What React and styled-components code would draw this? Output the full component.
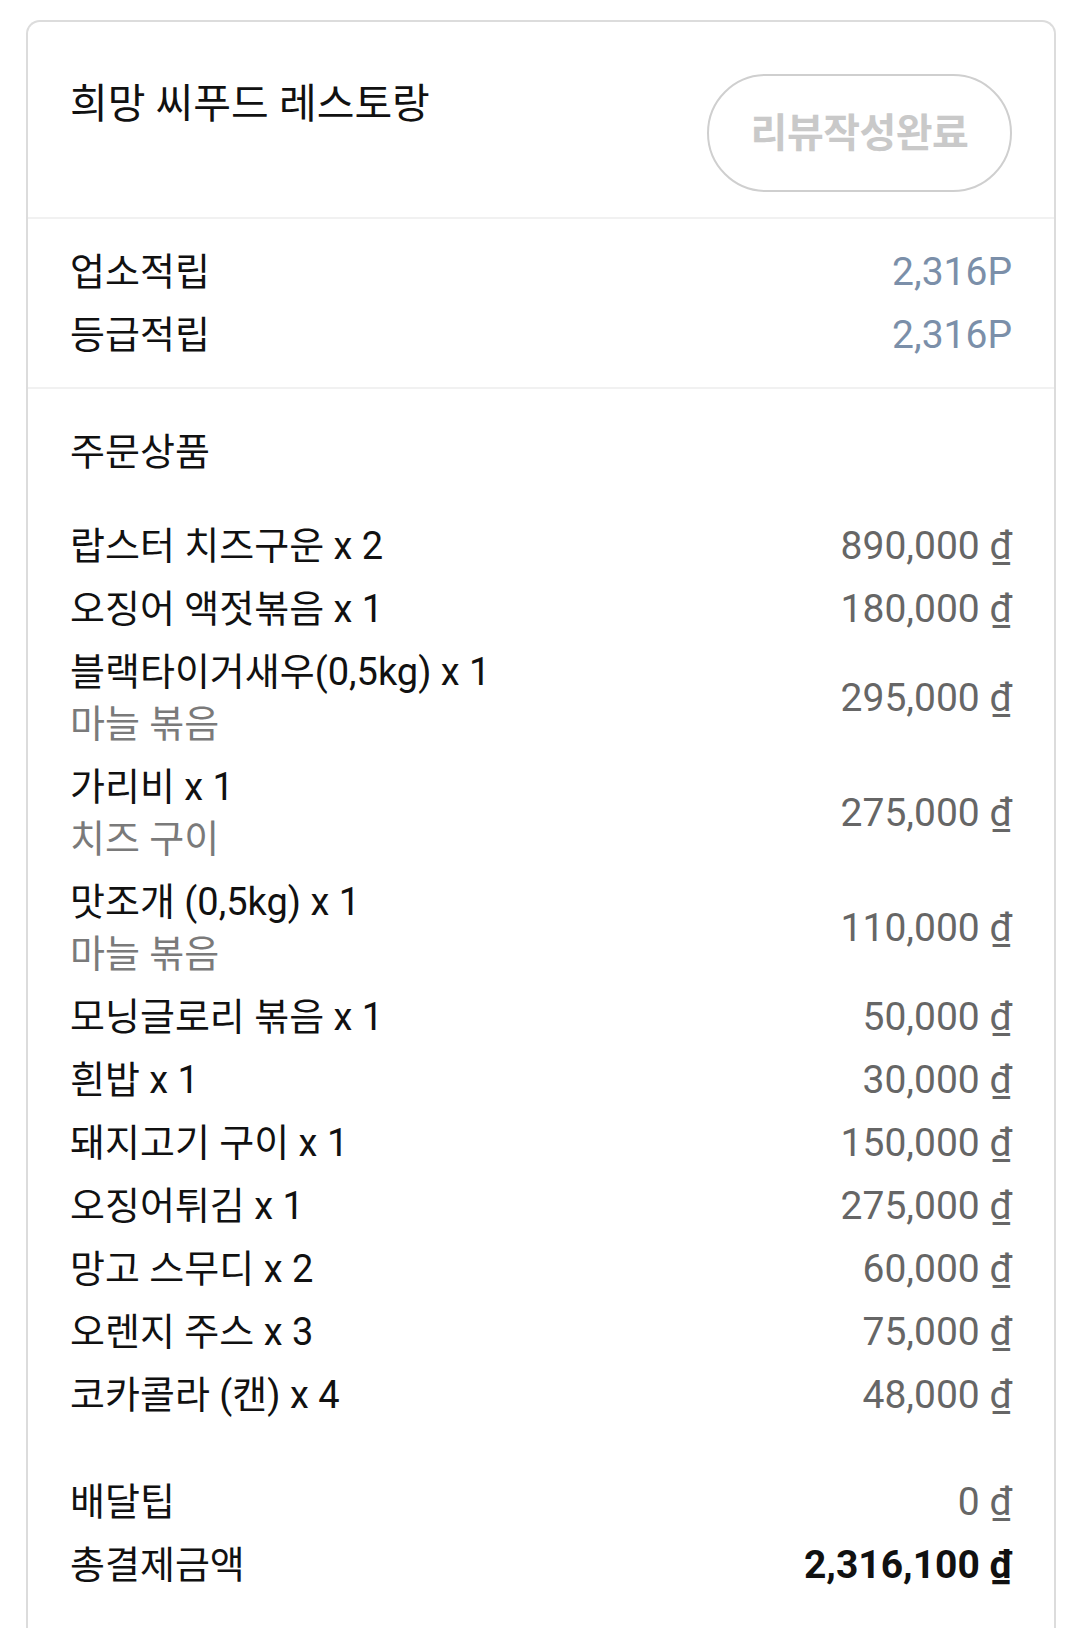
import React from "react";
import styled, { createGlobalStyle } from "styled-components";

const GlobalStyle = createGlobalStyle`
  html, body {
    margin: 0;
    padding: 0;
    background: #ffffff;
  }
  body {
    font-family: Roboto, "Noto Sans CJK KR", sans-serif;
    color: #111111;
    -webkit-font-smoothing: antialiased;
  }
`;

const Page = styled.div`
  width: 1080px;
  height: 1628px;
  overflow: hidden;
  padding-top: 20px;
  box-sizing: border-box;
`;

const Card = styled.div`
  margin-left: 26px;
  width: 1030px;
  box-sizing: border-box;
  border: 2px solid #dcdcdc;
  border-bottom: none;
  border-radius: 14px 14px 0 0;
  min-height: 1700px;
  background: #fff;
`;

const Section = styled.section`
  padding: ${(p) => p.$pad};
  border-bottom: ${(p) => (p.$divider ? "2px solid #f1f1f1" : "none")};
`;

const Header = styled.div`
  display: flex;
  justify-content: space-between;
  align-items: flex-start;
`;

const Title = styled.h1`
  margin: 0;
  font-size: 41px;
  font-weight: 400;
  line-height: 52px;
  padding-top: 4px;
`;

const ReviewButton = styled.button`
  width: 305px;
  height: 118px;
  border-radius: 59px;
  border: 2px solid #cfcfcf;
  background: #fff;
  color: #c9c9c9;
  font-family: Roboto, "Noto Sans CJK KR", sans-serif;
  font-size: 40px;
  font-weight: 700;
  letter-spacing: -0.5px;
  padding: 0 0 6px;
  display: flex;
  align-items: center;
  justify-content: center;
`;

const List = styled.div`
  display: flex;
  flex-direction: column;
  gap: ${(p) => p.$gap || "11px"};
`;

const Row = styled.div`
  display: flex;
  justify-content: space-between;
  align-items: center;
`;

const Label = styled.div`
  display: flex;
  flex-direction: column;
`;

const Name = styled.span`
  font-size: 38px;
  line-height: 52px;
  color: #111;
  white-space: nowrap;
`;

const Option = styled.span`
  font-size: 38px;
  line-height: 52px;
  color: #7a7a7a;
`;

const Value = styled.span`
  font-size: 39px;
  line-height: 52px;
  color: ${(p) => p.$color || "#666666"};
  font-weight: ${(p) => (p.$bold ? 700 : 400)};
  white-space: nowrap;
`;

const Heading = styled.h2`
  margin: 0 0 42px;
  font-size: 38px;
  font-weight: 400;
  line-height: 52px;
`;

const Totals = styled(List)`
  margin-top: 55px;
`;

const items = [
  { name: "랍스터 치즈구운 x 2", price: "890,000" },
  { name: "오징어 액젓볶음 x 1", price: "180,000" },
  { name: "블랙타이거새우(0,5kg) x 1", option: "마늘 볶음", price: "295,000" },
  { name: "가리비 x 1", option: "치즈 구이", price: "275,000" },
  { name: "맛조개 (0,5kg) x 1", option: "마늘 볶음", price: "110,000" },
  { name: "모닝글로리 볶음 x 1", price: "50,000" },
  { name: "흰밥 x 1", price: "30,000" },
  { name: "돼지고기 구이 x 1", price: "150,000" },
  { name: "오징어튀김 x 1", price: "275,000" },
  { name: "망고 스무디 x 2", price: "60,000" },
  { name: "오렌지 주스 x 3", price: "75,000" },
  { name: "코카콜라 (캔) x 4", price: "48,000" },
];

export default function App() {
  return (
    <Page>
      <GlobalStyle />
      <Card>
        <Section $divider $pad="52px 42px 25px">
          <Header>
            <Title>희망 씨푸드 레스토랑</Title>
            <ReviewButton type="button">리뷰작성완료</ReviewButton>
          </Header>
        </Section>
        <Section $divider $pad="27px 42px 26px">
          <List>
            <Row>
              <Name>업소적립</Name>
              <Value $color="#7b8fa9">2,316P</Value>
            </Row>
            <Row>
              <Name>등급적립</Name>
              <Value $color="#7b8fa9">2,316P</Value>
            </Row>
          </List>
        </Section>
        <Section $pad="37px 42px 60px">
          <Heading>주문상품</Heading>
          <List>
            {items.map((it) => (
              <Row key={it.name}>
                <Label>
                  <Name>{it.name}</Name>
                  {it.option && <Option>{it.option}</Option>}
                </Label>
                <Value>{it.price} ₫</Value>
              </Row>
            ))}
          </List>
          <Totals>
            <Row>
              <Name>배달팁</Name>
              <Value>0 ₫</Value>
            </Row>
            <Row>
              <Name>총결제금액</Name>
              <Value $bold $color="#111">2,316,100 ₫</Value>
            </Row>
          </Totals>
        </Section>
      </Card>
    </Page>
  );
}
